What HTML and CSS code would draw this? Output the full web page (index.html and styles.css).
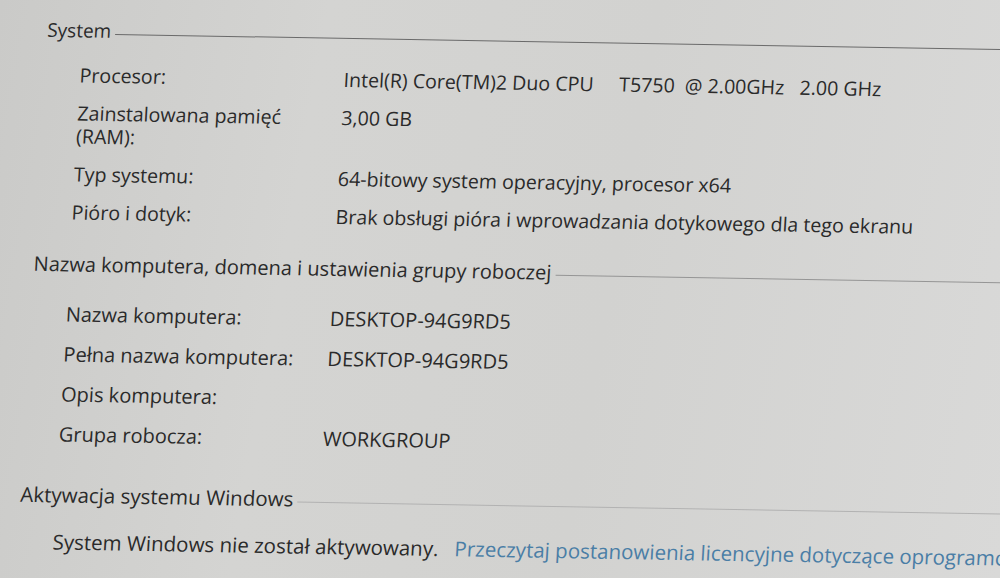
FILE: index.html
```html
<!DOCTYPE html>
<html lang="pl">
<head>
<meta charset="utf-8">
<title>System</title>
<link rel="stylesheet" href="styles.css">
</head>
<body>
<div class="page">
  <section class="sec sec-system">
    <div class="head"><span class="head-title">System</span><span class="head-line"></span></div>
    <div class="rows">
      <div class="label">Procesor:</div>
      <div class="value pre">Intel(R) Core(TM)2 Duo CPU     T5750  @ 2.00GHz   2.00 GHz</div>
      <div class="label">Zainstalowana pamięć<br>(RAM):</div>
      <div class="value">3,00 GB</div>
      <div class="label">Typ systemu:</div>
      <div class="value">64-bitowy system operacyjny, procesor x64</div>
      <div class="label">Pióro i dotyk:</div>
      <div class="value">Brak obsługi pióra i wprowadzania dotykowego dla tego ekranu</div>
    </div>
  </section>
  <section class="sec sec-name">
    <div class="head"><span class="head-title">Nazwa komputera, domena i ustawienia grupy roboczej</span><span class="head-line"></span></div>
    <div class="rows">
      <div class="label">Nazwa komputera:</div>
      <div class="value">DESKTOP-94G9RD5</div>
      <div class="label">Pełna nazwa komputera:</div>
      <div class="value">DESKTOP-94G9RD5</div>
      <div class="label">Opis komputera:</div>
      <div class="value"></div>
      <div class="label">Grupa robocza:</div>
      <div class="value">WORKGROUP</div>
    </div>
  </section>
  <section class="sec sec-act">
    <div class="head"><span class="head-title">Aktywacja systemu Windows</span><span class="head-line"></span></div>
    <div class="act-row">
      <span class="act-text">System Windows nie został aktywowany.</span>
      <a class="link" href="#">Przeczytaj postanowienia licencyjne dotyczące oprogramo</a>
    </div>
  </section>
</div>
</body>
</html>
```
FILE: styles.css
```css
html, body {
  margin: 0;
  padding: 0;
}
body {
  width: 1000px;
  height: 578px;
  overflow: hidden;
  background: linear-gradient(100deg, #cacac8 0%, #d4d4d2 30%, #d2d2d0 60%, #d9d9d8 100%);
  font-family: "Open Sans", "Noto Sans", sans-serif;
  color: #2a2a2a;
}
.page {
  width: 1200px;
  padding-top: 18px;
  padding-left: 49px;
  transform-origin: 0 0;
  transform: matrix(1, 0.017, -0.058, 1, 0, 0);
}
.sec {
  display: flex;
  flex-direction: column;
  font-size: 19.6px;
  line-height: 23px;
}
.sec-name { font-size: 20px; }
.sec-act { font-size: 20.5px; }
.head {
  display: flex;
  align-items: center;
  height: 23px;
}
.sec-system .head { font-size: 19px; }
.head-title {
  white-space: nowrap;
}
.head-line {
  flex: 1;
  height: 1px;
  margin-left: 4px;
  margin-top: 5px;
  background: #6a6a6a;
}
.sec-name .head-line { background: #959595; }
.sec-act .head-line { background: #b2b2b2; }

.rows {
  display: grid;
  grid-template-columns: 264px 1fr;
  row-gap: 15px;
  padding-left: 35px;
}
.sec-system .rows {
  margin-top: 21px;
}
.sec-name {
  margin-top: 29px;
}
.sec-name .rows {
  margin-top: 27px;
  row-gap: 17px;
}
.sec-act {
  margin-top: 38px;
}
.value {
  white-space: nowrap;
}
.pre {
  white-space: pre;
}
.act-row {
  margin-top: 24px;
  padding-left: 35px;
  display: flex;
  gap: 16px;
  white-space: nowrap;
}
.link {
  color: #4a7ea6;
  text-decoration: none;
}
```
